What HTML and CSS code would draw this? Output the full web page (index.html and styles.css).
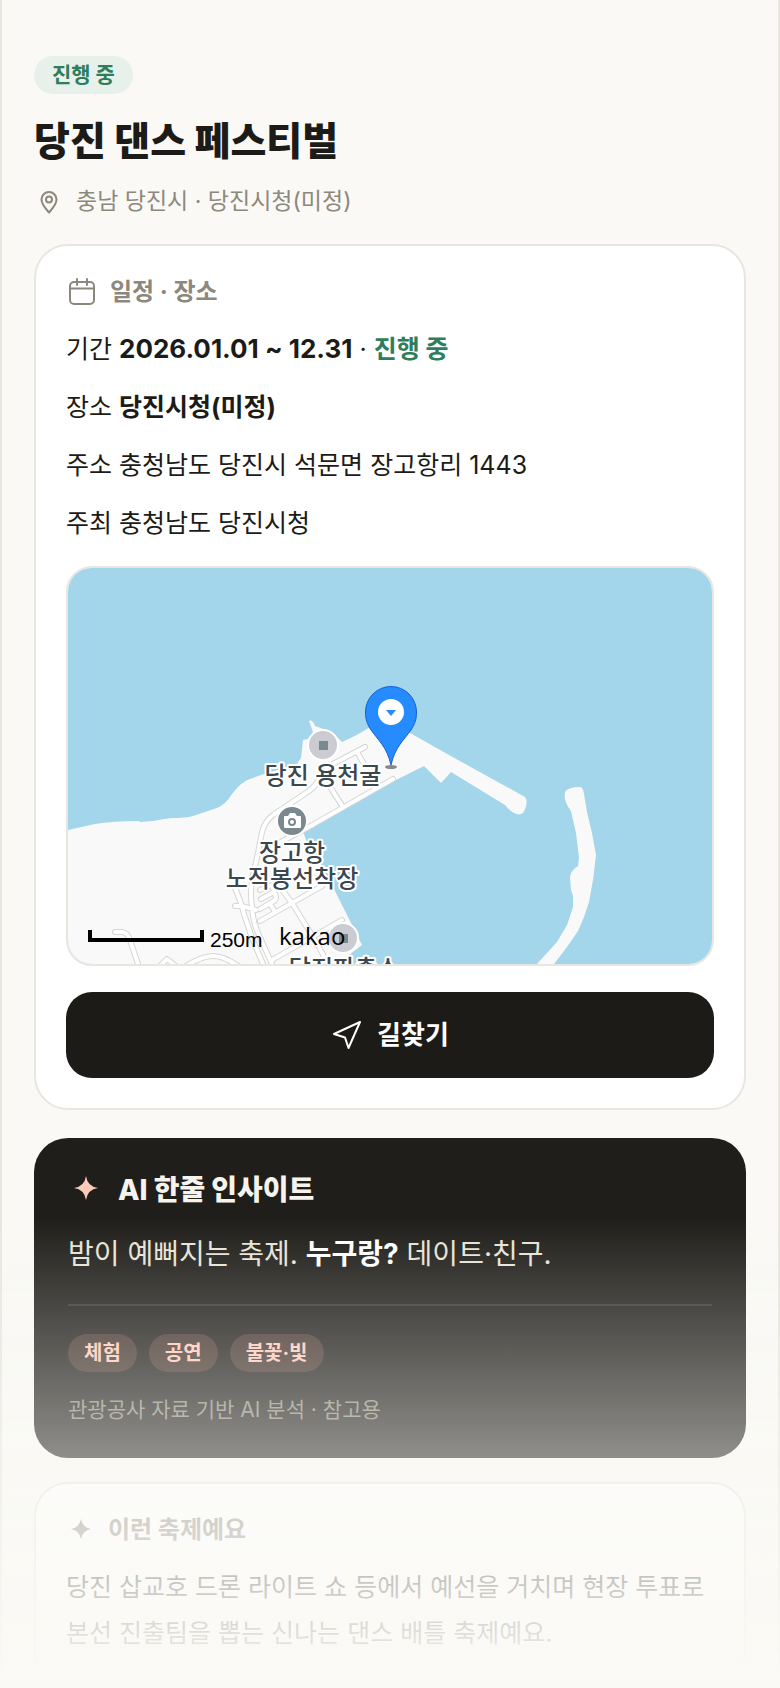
FILE: index.html
```html
<!DOCTYPE html>
<html lang="ko">
<head>
  <meta charset="UTF-8">
  <meta name="viewport" content="width=device-width, initial-scale=1.0">
  <title>당진 댄스 페스티벌</title>
  <link rel="stylesheet" href="styles.css">
</head>
<body>

  <main class="page">
    <header class="header">
      <span class="badge">진행 중</span>
      <h1>당진 댄스 페스티벌</h1>
      <p class="location">
        <svg class="icon-pin" viewBox="0 0 30 30" aria-hidden="true">
          <path d="M15 26.500C11 22 7.500 18.500 7.500 13.500a7.500 7.500 0 0 1 15 0C22.500 18.500 19 22 15 26.500z"/>
          <circle cx="15" cy="13.500" r="3"/>
        </svg>
        충남 당진시 · 당진시청(미정)
      </p>
    </header>

    <section class="card">
      <h2 class="card-title">
        <svg class="icon-calendar" viewBox="0 0 32 32" aria-hidden="true">
          <rect x="4" y="6" width="24" height="22" rx="4"/>
          <path d="M4 12.500h24M11 3v6M21 3v6"/>
        </svg>
        일정 · 장소
      </h2>
      <div class="info">
        <p>기간 <b class="date">2026.01.01 ~ 12.31</b> · <b class="status">진행 중</b></p>
        <p>장소 <b>당진시청(미정)</b></p>
        <p>주소 충청남도 당진시 석문면 장고항리 1443</p>
        <p>주최 충청남도 당진시청</p>
      </div>

      <div class="map">
        <svg viewBox="0 0 644 396" preserveAspectRatio="xMidYMid slice" role="img" aria-label="지도">
          <defs>
            <g id="roads">
              <path d="M297 179L265 196Q256 202 250 213Q246 220 238 225L205 247Q197 253 194 264L190 285L184 312Q182 326 184 339Q185 354 190 365L204 396"/>
              <path d="M289 184l7 12M262 219l13 20M325 211L239 260L209 276"/>
              <path d="M167 320q6 14 9 26l8 24l11 26M167 338h7l14 4"/>
              <path d="M192 353L224 335L254 318M212 319L224 335L250 377L261 398"/>
              <path d="M274 352L204 392M192 322l12-5l4 12q0 4-4 5l-12 7M193 331l13-7M202 336l4 6"/>
              <path d="M47 364h7q6 1 8 8l9 27M90 400l9-9l10 8M115 400q18-12 30-12t28 12"/>
            </g>
          </defs>
          <rect class="sea" width="644" height="396"/>
          <path class="land" d="M0 262L27 256Q45 253 71 253L72 254L85 253Q95 251 104 250Q118 250 125 248L149 240Q158 236 164 226Q174 213 182 211L199 205L228 197L233 190L235 172L240 171L245 164L241 153Q244 151 247 158L264 164L274 174Q290 167 302 159L317 151L342 165L390 192L457 229Q461 235 455 245Q448 250 437 237L383 204L373 215L356 198L312 220L235 263L239 275L265 319L294 377L281 387L285 396H0z"/>
          <path class="land" d="M497 224Q500 219 512 219Q515 219 516 226L519 244L524 265L528 287L525 312L521 334L516 349L510 363L499 379L486 396H469L489 374L499 357L505 339V328L503 322L502 309Q503 302 510 298L511 290L508 265L503 243Q495 233 497 224z"/>
          <use class="road-edge" href="#roads"/>
          <use class="road" href="#roads"/>

          <circle class="poi" cx="255" cy="177" r="15"/>
          <rect class="poi-dot" x="251" y="173" width="9" height="9"/>
          <circle class="poi" cx="275" cy="370" r="15"/>
          <rect class="poi-dot" x="271" y="366" width="9" height="9"/>
          <circle class="poi-camera" cx="224" cy="253" r="15"/>
          <path class="camera" d="M217 248h3l2-3h5l2 3h3q1 0 1 1v10q0 1-1 1h-15q-1 0-1-1v-10q0-1 1-1z"/>
          <circle class="lens" cx="224" cy="254" r="3"/>

          <text class="place" x="255" y="216">당진 용천굴</text>
          <text class="place" x="224" y="293">장고항</text>
          <text class="place" x="224" y="319">노적봉선착장</text>
          <text class="place" x="276" y="409">당진파출소</text>

          <path class="scale" d="M22 362v10h112v-10"/>
          <text class="scale-text" x="142" y="379">250m</text>
          <text class="brand" x="211" y="377">kakao</text>

          <ellipse class="marker-shadow" cx="323" cy="199" rx="6" ry="2"/>
          <path class="marker" d="M323 197C319 179 310 172 303 162C299 156 297.500 151 297.500 144a25.500 25.500 0 0 1 51 0C348.500 151 347 156 343 162C336 172 327 179 323 197z"/>
          <circle class="marker-hole" cx="323" cy="144" r="13"/>
          <path class="marker-arrow" d="M318 142h10l-5 6z"/>
        </svg>
      </div>

      <button type="button" class="btn">
        <svg class="icon-send" viewBox="0 0 32 32" aria-hidden="true">
          <path d="M29 3L3 15l11 3.500l3.500 10.500z"/>
        </svg>
        길찾기
      </button>
    </section>

    <section class="insight">
      <h2 class="insight-title">
        <svg class="icon-spark" viewBox="0 0 36 36" aria-hidden="true">
          <path d="M18 4Q19.500 14.500 30 16Q19.500 17.500 18 28Q16.500 17.500 6 16Q16.500 14.500 18 4z"/>
        </svg>
        AI 한줄 인사이트
      </h2>
      <p class="insight-text">밤이 예뻐지는 축제. <b>누구랑?</b> 데이트·친구.</p>
      <div class="chips">
        <span class="chip">체험</span>
        <span class="chip">공연</span>
        <span class="chip">불꽃·빛</span>
      </div>
      <p class="insight-note">관광공사 자료 기반 AI 분석 · 참고용</p>
    </section>

    <section class="card about">
      <h2 class="card-title">
        <svg class="icon-spark" viewBox="0 0 32 32" aria-hidden="true">
          <path d="M15 5Q16.500 13.500 25 15Q16.500 16.500 15 25Q13.500 16.500 5 15Q13.500 13.500 15 5z"/>
        </svg>
        이런 축제예요
      </h2>
      <p class="about-text">당진 삽교호 드론 라이트 쇼 등에서 예선을 거치며 현장 투표로 본선 진출팀을 뽑는 신나는 댄스 배틀 축제예요.</p>
    </section>
  </main>

  <div class="fade"></div>

</body>
</html>
```
FILE: styles.css
```css
* {
  box-sizing: border-box;
  margin: 0;
  padding: 0;
}

body {
  font-family: Inter, "Noto Sans CJK KR", sans-serif;
  background: #faf9f5;
  color: #1c1b17;
  font-size: 25px;
  word-break: keep-all;
}

svg {
  flex-shrink: 0;
}

.page {
  min-height: 100vh;
  padding: 56px 32px 0;
  border-left: 2px solid #e8e6df;
  border-right: 2px solid #e8e6df;
}

/* header */
.header {
  display: flex;
  flex-direction: column;
  align-items: flex-start;
  margin-bottom: 26px;
}

.badge {
  padding: 0 18px;
  border-radius: 19px;
  background: #e8f0eb;
  color: #2e7d5b;
  font-size: 21px;
  font-weight: 700;
  line-height: 38px;
}

h1 {
  margin-top: 22px;
  font-size: 39px;
  font-weight: 800;
  line-height: 50px;
}

.location {
  display: flex;
  align-items: center;
  gap: 12px;
  margin-top: 18px;
  color: #8c887d;
  font-size: 23px;
  line-height: 34px;
}

.icon-pin,
.icon-calendar,
.icon-send {
  fill: none;
  stroke: currentColor;
  stroke-width: 2;
  stroke-linecap: round;
  stroke-linejoin: round;
}

.icon-pin {
  width: 30px;
  height: 30px;
}

/* cards */
.card {
  padding: 30px;
  border: 2px solid #e8e6df;
  border-radius: 34px;
  background: #fff;
}

.card-title {
  display: flex;
  align-items: center;
  gap: 12px;
  margin-bottom: 20px;
  color: #8c887d;
  font-size: 24px;
  font-weight: 700;
  line-height: 32px;
}

.card-title svg {
  width: 32px;
  height: 32px;
}

.info {
  display: flex;
  flex-direction: column;
  gap: 16px;
  line-height: 42px;
}

.date {
  font-size: 26px;
}

.status {
  color: #2e7d5b;
}

.map {
  height: 400px;
  margin-top: 22px;
  border: 2px solid #e8e6df;
  border-radius: 26px;
  overflow: hidden;
}

.map svg {
  display: block;
  width: 100%;
  height: 100%;
}

.sea {
  fill: #a3d6eb;
}

.land {
  fill: #f9f9f9;
}

.road-edge,
.road {
  fill: none;
  stroke: #d6d6d6;
  stroke-width: 6;
  stroke-linecap: round;
  stroke-linejoin: round;
}

.road {
  stroke: #fff;
  stroke-width: 4;
}

.poi {
  fill: #cbccd1;
  stroke: #fff;
  stroke-width: 2;
}

.poi-dot {
  fill: #7a898f;
}

.poi-camera {
  fill: #7a898f;
  stroke: #fff;
  stroke-width: 2;
}

.camera {
  fill: #fff;
}

.lens {
  fill: none;
  stroke: #7a898f;
  stroke-width: 2;
}

.place {
  fill: #3b474d;
  stroke: #fff;
  stroke-width: 4;
  stroke-linejoin: round;
  paint-order: stroke;
  font-size: 24px;
  font-weight: 500;
  text-anchor: middle;
}

.scale {
  fill: none;
  stroke: #000;
  stroke-width: 4;
}

.scale-text {
  font-family: "Liberation Sans", sans-serif;
  font-size: 21px;
}

.brand {
  font-family: "Open Sans", sans-serif;
  font-size: 24px;
}

.marker {
  fill: #258bff;
  stroke: #1660cf;
}

.marker-hole {
  fill: #fff;
}

.marker-arrow {
  fill: #258bff;
}

.marker-shadow {
  fill: #888;
}

.btn {
  display: flex;
  align-items: center;
  justify-content: center;
  gap: 14px;
  width: 100%;
  height: 86px;
  margin-top: 26px;
  border: none;
  border-radius: 26px;
  background: #1c1b17;
  color: #fff;
  font-family: inherit;
  font-size: 26px;
  font-weight: 700;
  line-height: 32px;
  cursor: pointer;
}

.icon-send {
  width: 32px;
  height: 32px;
}

/* AI insight */
.insight {
  margin-top: 28px;
  padding: 34px;
  border-radius: 34px;
  background: #1f1e1a;
}

.insight-title {
  display: flex;
  align-items: center;
  gap: 14px;
  color: #f5f3ec;
  font-size: 28px;
  font-weight: 800;
  line-height: 36px;
}

.insight-title svg {
  width: 36px;
  height: 36px;
  color: #ffc9b8;
}

.icon-spark {
  fill: currentColor;
}

.insight-text {
  margin-top: 24px;
  color: #e8e3d6;
  font-size: 28px;
  line-height: 44px;
}

.insight-text b {
  color: #fff;
}

.chips {
  display: flex;
  gap: 12px;
  margin-top: 28px;
  padding-top: 28px;
  border-top: 2px solid rgba(255, 255, 255, 0.1);
}

.chip {
  padding: 0 16px;
  border-radius: 19px;
  background: rgba(255, 160, 140, 0.16);
  color: #ffc9b8;
  font-size: 20px;
  font-weight: 700;
  line-height: 38px;
}

.insight-note {
  margin-top: 24px;
  color: #8c887d;
  font-size: 21px;
  line-height: 28px;
}

/* about */
.about {
  margin-top: 24px;
}

.about .card-title {
  gap: 10px;
  margin-bottom: 18px;
}

.about-text {
  line-height: 46px;
}

/* bottom of the screen fades into the background */
.fade {
  position: fixed;
  left: 0;
  right: 0;
  bottom: 0;
  height: 28vh;
  background: linear-gradient(rgba(250, 249, 245, 0), #faf9f5);
  pointer-events: none;
}
```
